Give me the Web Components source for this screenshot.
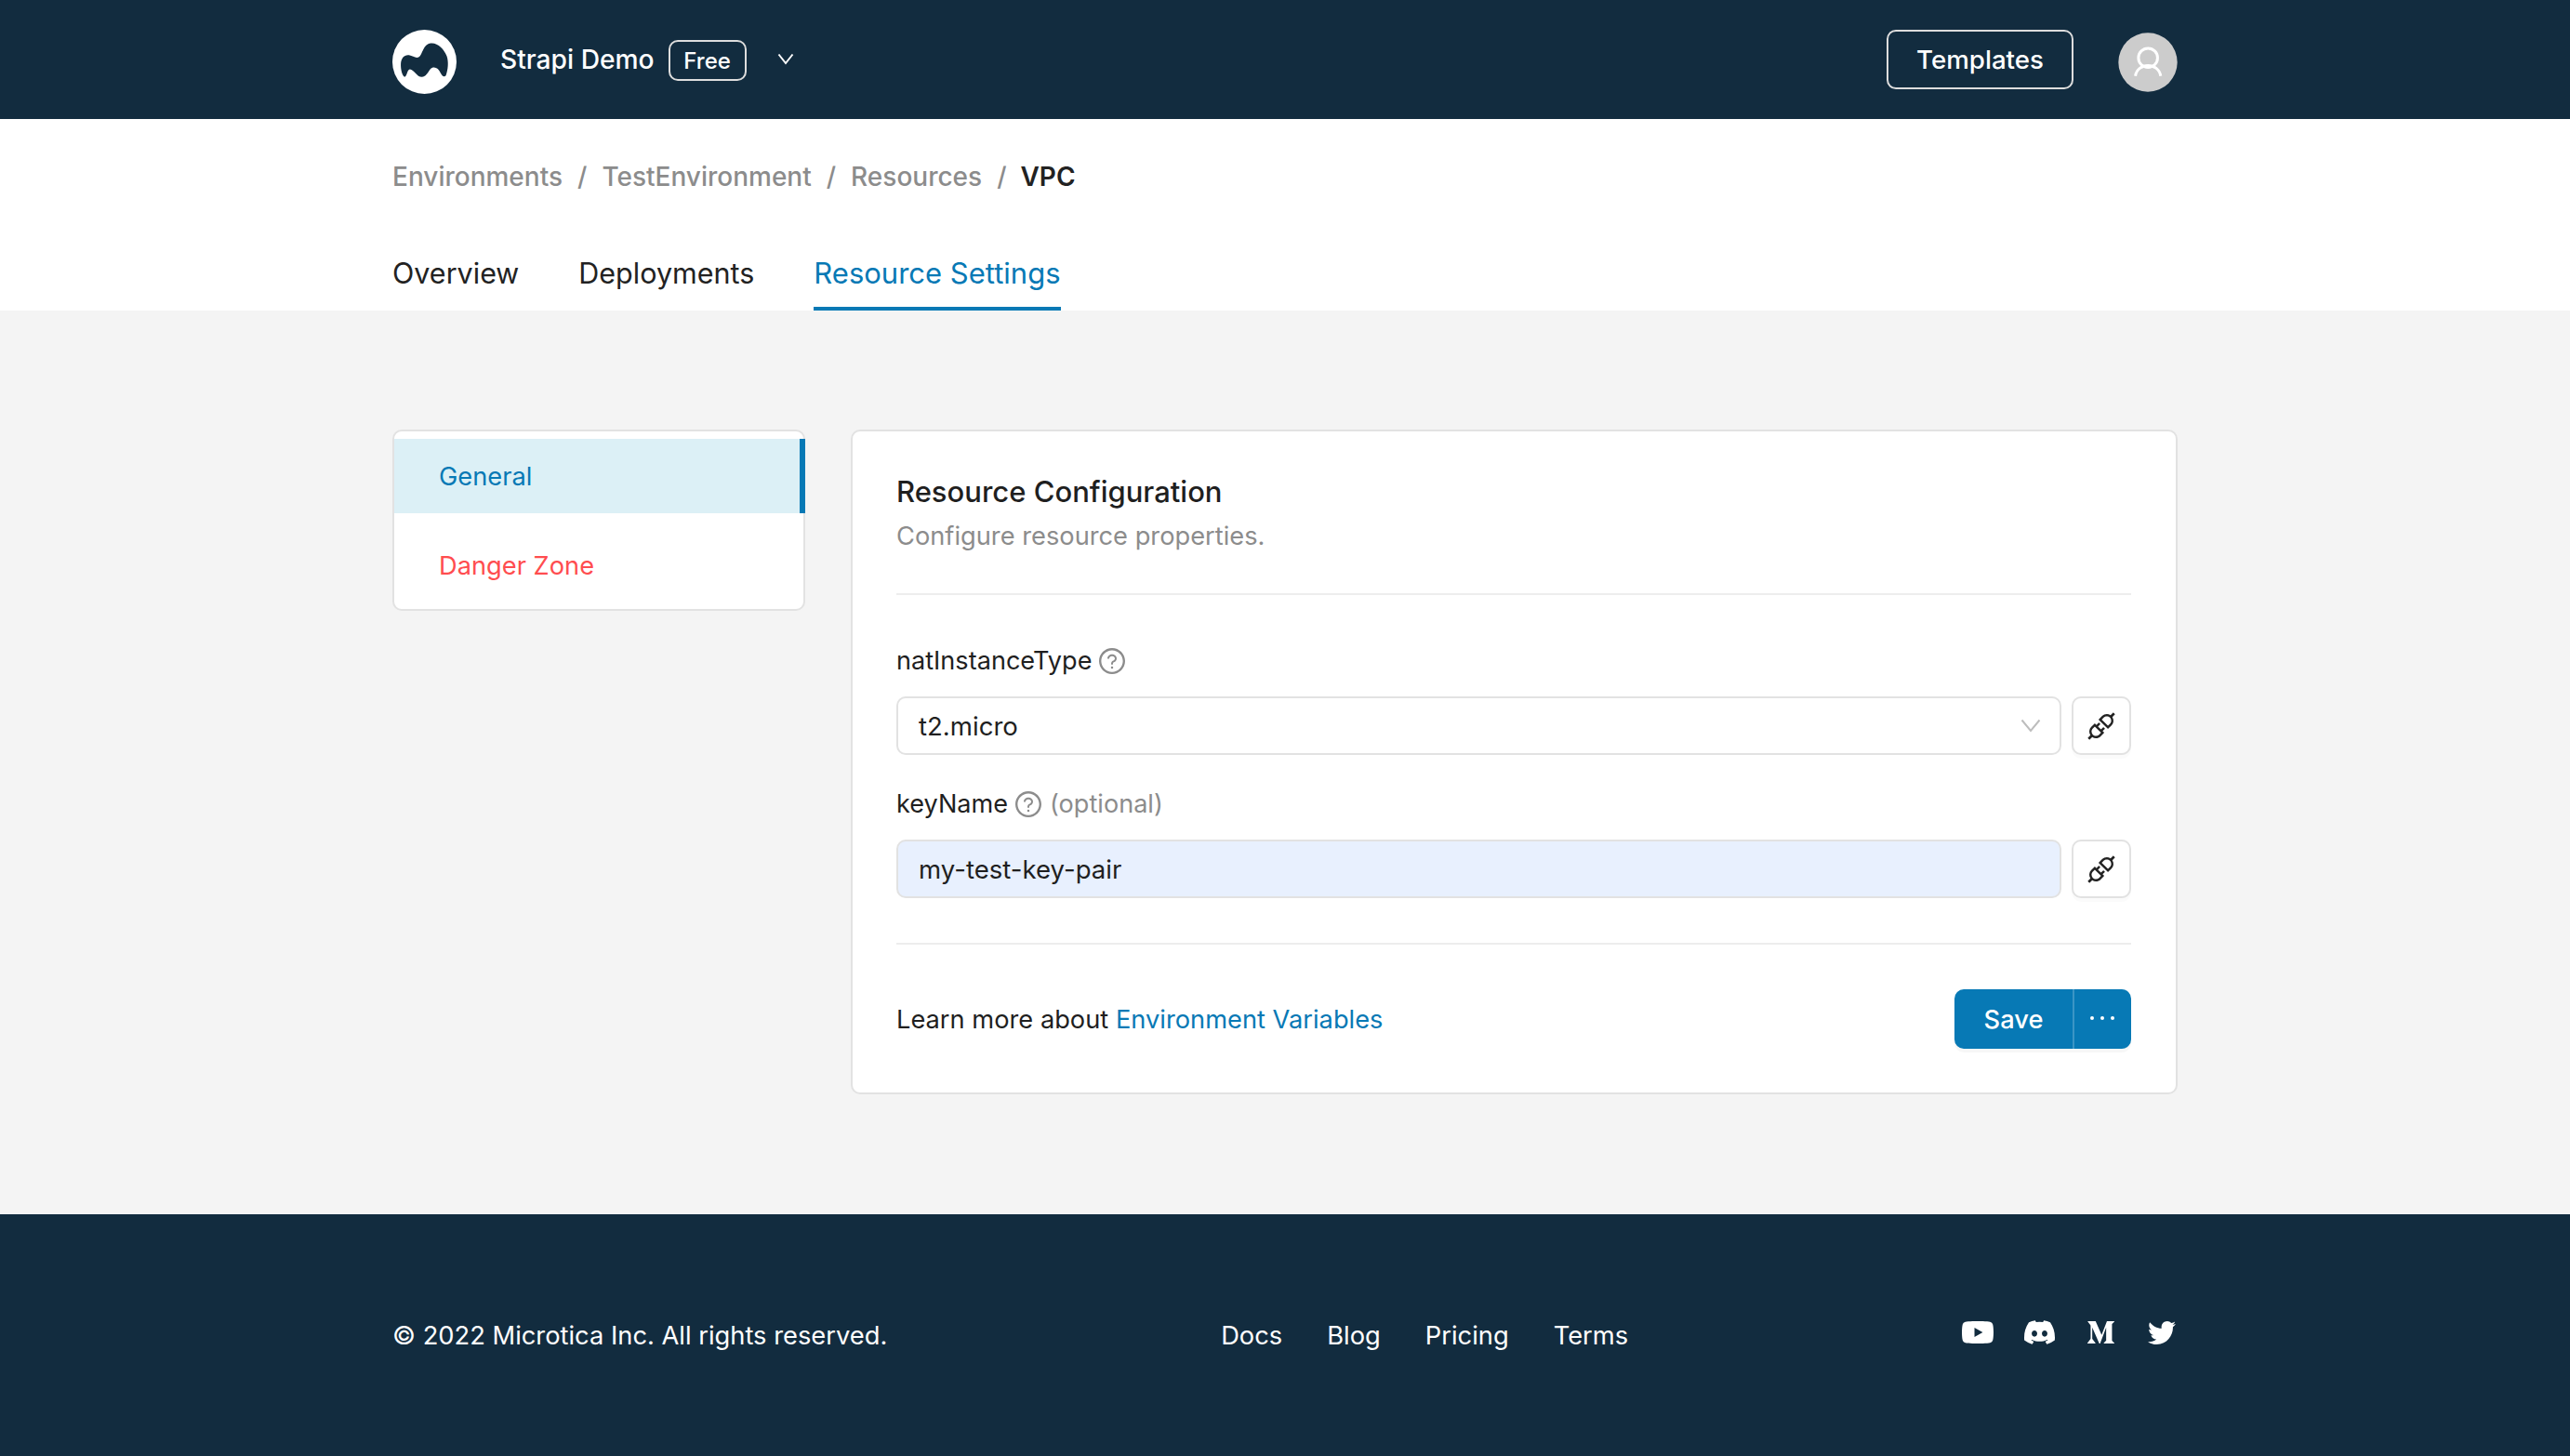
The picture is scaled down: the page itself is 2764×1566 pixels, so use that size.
<!DOCTYPE html>
<html lang="en">
<head>
<meta charset="utf-8">
<title>VPC - Resource Settings</title>
<style>
  html, body { margin: 0; padding: 0; background: #f4f4f4; }
  body { font-family: Inter, "Liberation Sans", sans-serif; font-size: 27.25px; color: #1f1f1f; }
</style>
</head>
<body>
<app-header></app-header>
<page-nav></page-nav>
<settings-page>
  <side-menu slot="side"></side-menu>
  <config-card slot="main"></config-card>
</settings-page>
<app-footer></app-footer>

<script>
const WRAP = "width: 1920px; margin: 0 auto;";
const HELP_PATH = "M512 64C264.6 64 64 264.6 64 512s200.6 448 448 448 448-200.6 448-448S759.4 64 512 64zm0 820c-205.4 0-372-166.6-372-372s166.6-372 372-372 372 166.6 372 372-166.6 372-372 372z M623.6 316.7C593.6 290.4 554 276 512 276s-81.6 14.5-111.6 40.7C369.2 344 352 380.7 352 420v7.6c0 4.4 3.6 8 8 8h48c4.4 0 8-3.6 8-8V420c0-44.1 43.1-80 96-80s96 35.9 96 80c0 31.1-22 59.6-56.1 72.7-21.2 8.1-39.2 22.3-52.1 40.9-13.1 19-19.9 41.8-19.9 64.9V620c0 4.4 3.6 8 8 8h48c4.4 0 8-3.6 8-8v-22.7a48.3 48.3 0 0130.9-44.8c59-22.7 97.1-74.7 97.1-132.5.1-39.3-17.1-76-48.3-103.3z M472 732a40 40 0 1080 0 40 40 0 10-80 0z";
const PLUG_PATH = "M917.7 148.8l-42.4-42.4c-1.6-1.6-3.6-2.3-5.7-2.3s-4.1.8-5.7 2.3l-76.1 76.1a199.27 199.27 0 00-112.1-34.3c-51.2 0-102.4 19.5-141.5 58.6L432.3 308.7a8.03 8.03 0 000 11.3L704 591.7c1.6 1.6 3.6 2.3 5.7 2.3 2 0 4.1-.8 5.7-2.3l101.9-101.9c68.9-69 77-175.7 24.3-253.5l76.1-76.1c3.1-3.2 3.1-8.3 0-11.4zM769.1 441.7l-59.4 59.4-186.8-186.8 59.4-59.4c24.9-24.9 58.1-38.7 93.4-38.7 35.3 0 68.4 13.7 93.4 38.7 24.9 24.9 38.7 58.1 38.7 93.4 0 35.3-13.8 68.4-38.7 93.4zm-190.2 105a8.03 8.03 0 00-11.3 0L501 613.3 410.7 523l66.7-66.7c3.1-3.1 3.1-8.2 0-11.3L441 408.6a8.03 8.03 0 00-11.3 0L363 475.3l-43-43a7.85 7.85 0 00-5.7-2.3c-2 0-4.1.8-5.7 2.3L206.8 534.2c-68.9 69-77 175.7-24.3 253.5l-76.1 76.1a8.03 8.03 0 000 11.3l42.4 42.4c1.6 1.6 3.6 2.3 5.7 2.3s4.1-.8 5.7-2.3l76.1-76.1c33.7 22.9 72.9 34.3 112.1 34.3 51.2 0 102.4-19.5 141.5-58.6l101.9-101.9c3.1-3.1 3.1-8.2 0-11.3l-43-43 66.7-66.7c3.1-3.1 3.1-8.2 0-11.3l-36.6-36.2zM441.7 769.1a131.32 131.32 0 01-93.4 38.7c-35.3 0-68.4-13.7-93.4-38.7a131.32 131.32 0 01-38.7-93.4c0-35.3 13.7-68.4 38.7-93.4l59.4-59.4 186.8 186.8-59.4 59.4z";

class AppHeader extends HTMLElement {
  constructor() {
    super();
    this.attachShadow({ mode: "open" });
    this.shadowRoot.innerHTML = `
      <style>
        :host { display: block; background: #122c3f; color: #fff; }
        .bar { ${WRAP} height: 128px; display: flex; align-items: center; }
        .logo { width: 69px; height: 69px; display: block; margin: 4px 47px 0 0; }
        .name { font-size: 28.2px; font-weight: 500; }
        .badge { margin: 2px 0 0 15px; width: 84px; height: 44px; box-sizing: border-box; border: 2px solid #ddd;
                 border-radius: 10px; display: flex; align-items: center; justify-content: center;
                 font-size: 24px; font-weight: 500; }
        .chev { margin-left: 33px; width: 18px; height: 13px; display: block; margin-bottom: 2px; }
        .tpl { margin-left: auto; width: 201px; height: 64px; box-sizing: border-box; border: 2px solid #ddd;
               border-radius: 10px; display: flex; align-items: center; justify-content: center;
               font-size: 27.7px; font-weight: 500; }
        .avatar { margin: 6px 0 0 48px; width: 64px; height: 64px; display: block; }
      </style>
      <div class="bar">
        <svg class="logo" viewBox="67 97 205 205">
          <circle cx="169.5" cy="199.5" r="102.5" fill="#fff"/>
          <path fill="#122c3f" d="M94 205 C95 188 105 176 120 178 C133 180 142 190 152 184 C164 176 165 142 190 140 C212 138 232 158 241 182 C247 200 245 225 238 243 C232 250 226 245 221 235 C215 222 206 215 195 218 C183 222 179 247 162 248 C146 249 136 224 123 223 C114 224 114 245 106 248 C99 245 93 225 94 205Z"/>
        </svg>
        <span class="name">Strapi Demo</span>
        <span class="badge">Free</span>
        <svg class="chev" viewBox="0 0 18 13"><path d="M1.5 1.5 L9 11 L16.5 1.5" fill="none" stroke="#fff" stroke-width="2"/></svg>
        <span class="tpl">Templates</span>
        <svg class="avatar" viewBox="893 105 193 191">
          <circle cx="989.500" cy="200.500" r="95.500" fill="#ccc"/>
          <circle cx="990" cy="186" r="31" fill="none" stroke="#fff" stroke-width="9"/>
          <path d="M949 245 C955 200 1025 200 1031 245" fill="none" stroke="#fff" stroke-width="9"/>
        </svg>
      </div>`;
  }
}

class PageNav extends HTMLElement {
  constructor() {
    super();
    this.attachShadow({ mode: "open" });
    this.shadowRoot.innerHTML = `
      <style>
        :host { display: block; background: #fff; }
        .in { ${WRAP} height: 206px; }
        .crumbs { height: 124px; display: flex; align-items: center; gap: 16px; font-size: 28px; font-weight: 500; color: #8c8c8c; }
        .crumbs b { font-weight: 600; color: #222; margin-left: -1px; }
        .tabs { display: flex; gap: 64px; height: 82px; }
        .tab { height: 82px; box-sizing: border-box; padding-top: 22px; line-height: 40px; font-size: 30.5px; color: #222; }
        .tab.on { font-size: 31px; color: #0779b5; border-bottom: 4px solid #0779b5; }
      </style>
      <div class="in">
        <div class="crumbs">
          <span>Environments</span><span>/</span><span>TestEnvironment</span><span>/</span><span>Resources</span><span>/</span><b>VPC</b>
        </div>
        <div class="tabs">
          <span class="tab">Overview</span>
          <span class="tab">Deployments</span>
          <span class="tab on">Resource Settings</span>
        </div>
      </div>`;
  }
}

class SettingsPage extends HTMLElement {
  constructor() {
    super();
    this.attachShadow({ mode: "open" });
    this.shadowRoot.innerHTML = `
      <style>
        :host { display: block; background: #f4f4f4; }
        .grid { ${WRAP} box-sizing: border-box; padding: 128px 0 129px; display: grid;
                grid-template-columns: 444px 1427px; column-gap: 49px; align-items: start; }
      </style>
      <div class="grid"><slot name="side"></slot><slot name="main"></slot></div>`;
  }
}

class SideMenu extends HTMLElement {
  constructor() {
    super();
    this.attachShadow({ mode: "open" });
    this.shadowRoot.innerHTML = `
      <style>
        :host { display: block; height: 195px; box-sizing: border-box; background: #fff; border: 2px solid #e2e2e2;
                border-radius: 10px; padding: 8px 0 7px; }
        .item { height: 80px; box-sizing: border-box; display: flex; align-items: center; padding-left: 48px; }
        .on { background: #dcf0f6; color: #0779b5; border-right: 6px solid #0779b5; margin-right: -2px; }
        .danger { color: #ff4d4f; margin-top: 16px; }
      </style>
      <div class="item on">General</div>
      <div class="item danger">Danger Zone</div>`;
  }
}

class HelpIcon extends HTMLElement {
  constructor() {
    super();
    this.attachShadow({ mode: "open" });
    this.shadowRoot.innerHTML = `
      <style>
        :host { display: inline-flex; margin-top: -1px; }
        svg { width: 28px; height: 28px; fill: #8c8c8c; display: block; }
      </style>
      <svg viewBox="64 64 896 896"><path d="${HELP_PATH}"/></svg>`;
  }
}

class PlugButton extends HTMLElement {
  constructor() {
    super();
    this.attachShadow({ mode: "open" });
    this.shadowRoot.innerHTML = `
      <style>
        :host { display: flex; width: 64px; height: 63px; box-sizing: border-box; align-items: center; justify-content: center;
                background: #fff; border: 2px solid #e2e2e2; border-radius: 10px; box-shadow: 0 4px 0 rgba(0,0,0,.015); flex: none; }
        svg { width: 32px; height: 32px; fill: #222; display: block; }
      </style>
      <svg viewBox="64 64 896 896"><path d="${PLUG_PATH}"/></svg>`;
  }
}

class FormField extends HTMLElement {
  static get observedAttributes() { return ["label", "value", "kind", "optional"]; }
  constructor() {
    super();
    this.attachShadow({ mode: "open" });
  }
  connectedCallback() { this._render(); }
  attributeChangedCallback() { this._render(); }
  _render() {
    const kind = this.getAttribute("kind") || "input";
    const opt = this.hasAttribute("optional");
    this.shadowRoot.innerHTML = `
      <style>
        :host { display: block; }
        .label { height: 40px; line-height: 40px; display: flex; align-items: center; gap: 8px; margin-bottom: 18px; font-size: 27.1px; }
        .opt { color: #8c8c8c; margin-left: 1px; }
        .row { display: flex; gap: 11px; }
        .box { flex: 1; height: 63px; box-sizing: border-box; border: 2px solid #e2e2e2; border-radius: 10px; font-size: 27.6px;
               display: flex; align-items: center; padding: 0 20px 0 22px; justify-content: space-between; background: #fff; }
        .box.fill { background: #e8f0fe; }
        .chev { width: 22px; height: 15px; display: block; }
      </style>
      <div class="label"><span>${this.getAttribute("label") || ""}</span><help-icon></help-icon>${opt ? '<span class="opt">(optional)</span>' : ""}</div>
      <div class="row">
        <div class="box ${kind === "input" ? "fill" : ""}">
          <span>${this.getAttribute("value") || ""}</span>
          ${kind === "select" ? '<svg class="chev" viewBox="0 0 22 15"><path d="M1.500 1.500 L11 13 L20.500 1.500" fill="none" stroke="#bdbdbd" stroke-width="2"/></svg>' : ""}
        </div>
        <plug-button></plug-button>
      </div>`;
  }
}

class SaveButton extends HTMLElement {
  constructor() {
    super();
    this.attachShadow({ mode: "open" });
    this.shadowRoot.innerHTML = `
      <style>
        :host { display: flex; width: 190px; height: 64px; background: #0779b5; color: #fff; border-radius: 10px;
                box-shadow: 0 4px 0 rgba(0,0,0,.03); overflow: hidden; }
        .save { width: 127px; display: flex; align-items: center; justify-content: center; font-weight: 500; }
        .sep { width: 2px; background: #3b95c5; }
        .more { flex: 1; display: flex; align-items: center; justify-content: center; gap: 7px; padding: 0 2px 2px 0; }
        .more i { width: 4px; height: 4px; border-radius: 50%; background: #fff; display: block; }
      </style>
      <span class="save">Save</span><span class="sep"></span>
      <span class="more"><i></i><i></i><i></i></span>`;
  }
}

class ConfigCard extends HTMLElement {
  constructor() {
    super();
    this.attachShadow({ mode: "open" });
    this.shadowRoot.innerHTML = `
      <style>
        :host { display: block; height: 715px; box-sizing: border-box; background: #fff; border: 2px solid #e2e2e2;
                border-radius: 10px; padding: 45px 48px 0 47px; }
        h2 { margin: 0; font-size: 31px; line-height: 40px; font-weight: 500; color: #1f1f1f; }
        p { margin: 8px 0 0; line-height: 40px; color: #8c8c8c; }
        hr { border: 0; height: 2px; background: #ededed; margin: 0; }
        .top { margin-top: 41px; margin-bottom: 51px; }
        .second { margin-top: 33px; }
        .bottom { margin-top: 48px; margin-bottom: 48px; }
        .foot { display: flex; align-items: center; justify-content: space-between; }
        a { color: #0779b5; text-decoration: none; }
      </style>
      <h2>Resource Configuration</h2>
      <p>Configure resource properties.</p>
      <hr class="top">
      <form-field label="natInstanceType" value="t2.micro" kind="select"></form-field>
      <form-field class="second" label="keyName" value="my-test-key-pair" kind="input" optional></form-field>
      <hr class="bottom">
      <div class="foot">
        <span>Learn more about <a>Environment Variables</a></span>
        <save-button></save-button>
      </div>`;
  }
}

class AppFooter extends HTMLElement {
  constructor() {
    super();
    this.attachShadow({ mode: "open" });
    this.shadowRoot.innerHTML = `
      <style>
        :host { display: block; background: #122c3f; color: #fff; }
        .in { ${WRAP} height: 260px; display: flex; align-items: center; justify-content: space-between; font-size: 27.3px; }
        .links { display: flex; gap: 48px; }
        .social { display: flex; align-items: center; margin: -6px 2px 0 0; }
        svg { fill: #fff; display: block; }
      </style>
      <div class="in">
        <span>© 2022 Microtica Inc. All rights reserved.</span>
        <div class="links"><span>Docs</span><span>Blog</span><span>Pricing</span><span>Terms</span></div>
        <div class="social">
          <svg width="34" height="24" viewBox="15 64 546 384" preserveAspectRatio="none"><path d="M549.655 124.083c-6.281-23.65-24.787-42.276-48.284-48.597C458.781 64 288 64 288 64S117.22 64 74.629 75.486c-23.497 6.322-42.003 24.947-48.284 48.597-11.412 42.867-11.412 132.305-11.412 132.305s0 89.438 11.412 132.305c6.281 23.65 24.787 41.5 48.284 47.821C117.22 448 288 448 288 448s170.78 0 213.371-11.486c23.497-6.321 42.003-24.171 48.284-47.821 11.412-42.867 11.412-132.305 11.412-132.305s0-89.438-11.412-132.305zm-317.51 213.508V175.185l142.739 81.205-142.739 81.201z"/></svg>
          <svg style="margin-left:33px" width="33" height="26" viewBox="0 1.8 16 12.4" preserveAspectRatio="none"><path d="M13.545 2.907a13.227 13.227 0 0 0-3.257-1.011.05.05 0 0 0-.052.025c-.141.25-.297.577-.406.833a12.19 12.19 0 0 0-3.658 0 8.258 8.258 0 0 0-.412-.833.051.051 0 0 0-.052-.025c-1.125.194-2.22.534-3.257 1.011a.041.041 0 0 0-.021.018C.356 6.024-.213 9.047.066 12.032c.001.014.01.028.021.037a13.276 13.276 0 0 0 3.995 2.02.05.05 0 0 0 .056-.019c.308-.42.582-.863.818-1.329a.05.05 0 0 0-.01-.059.051.051 0 0 0-.018-.011 8.875 8.875 0 0 1-1.248-.595.05.05 0 0 1-.02-.066.051.051 0 0 1 .015-.019c.084-.063.168-.129.248-.195a.05.05 0 0 1 .051-.007c2.619 1.196 5.454 1.196 8.041 0a.052.052 0 0 1 .053.007c.08.066.164.132.248.195a.051.051 0 0 1-.004.085 8.254 8.254 0 0 1-1.249.594.05.05 0 0 0-.03.03.052.052 0 0 0 .003.041c.24.465.515.909.817 1.329a.05.05 0 0 0 .056.019 13.235 13.235 0 0 0 4.001-2.02.049.049 0 0 0 .021-.037c.334-3.451-.559-6.449-2.366-9.106a.034.034 0 0 0-.02-.019Zm-8.198 7.307c-.789 0-1.438-.724-1.438-1.612 0-.889.637-1.613 1.438-1.613.807 0 1.45.73 1.438 1.613 0 .888-.637 1.612-1.438 1.612Zm5.316 0c-.788 0-1.438-.724-1.438-1.612 0-.889.637-1.613 1.438-1.613.807 0 1.451.73 1.438 1.613 0 .888-.631 1.612-1.438 1.612Z"/></svg>
          <svg style="margin-left:35px" width="29" height="24" viewBox="14 64 484 384" preserveAspectRatio="none"><path d="M71.5 142.3c.6-5.9-1.7-11.8-6.1-15.8L20.3 72.1V64h140.2l108.4 237.7L364.2 64h133.7v8.1l-38.6 37c-3.3 2.5-5 6.7-4.3 10.8v272c-.7 4.1 1 8.3 4.3 10.8l37.700 37v8.1H307.3v-8.1l39.1-37.9c3.8-3.8 3.800-5 3.800-10.8V171.2L241.5 447.1h-14.7L100.4 171.2v184.9c-1.1 7.8 1.5 15.6 7 21.2l50.8 61.6v8.1H14v-8.1l50.8-61.6c5.4-5.6 7.9-13.5 6.7-21.2V142.3z"/></svg>
          <svg style="margin-left:36px" width="30" height="25" viewBox="0 48 512 416" preserveAspectRatio="none"><path d="M459.37 151.716c.325 4.548.325 9.097.325 13.645 0 138.72-105.583 298.558-298.558 298.558-59.452 0-114.68-17.219-161.137-47.106 8.447.974 16.568 1.299 25.34 1.299 49.055 0 94.213-16.568 130.274-44.832-46.132-.975-84.792-31.188-98.112-72.772 6.498.974 12.995 1.624 19.818 1.624 9.421 0 18.843-1.3 27.614-3.573-48.081-9.747-84.143-51.98-84.143-102.985v-1.299c13.969 7.797 30.214 12.67 47.431 13.319-28.264-18.843-46.781-51.005-46.781-87.391 0-19.492 5.197-37.36 14.294-52.954 51.655 63.675 129.3 105.258 216.365 109.807-1.624-7.797-2.599-15.918-2.599-24.04 0-57.828 46.782-104.934 104.934-104.934 30.213 0 57.502 12.67 76.67 33.137 23.715-4.548 46.456-13.32 66.599-25.34-7.798 24.366-24.366 44.833-46.132 57.827 21.117-2.273 41.584-8.122 60.426-16.243-14.292 20.791-32.161 39.308-52.628 54.253z"/></svg>
        </div>
      </div>`;
  }
}

customElements.define("app-header", AppHeader);
customElements.define("page-nav", PageNav);
customElements.define("settings-page", SettingsPage);
customElements.define("side-menu", SideMenu);
customElements.define("help-icon", HelpIcon);
customElements.define("plug-button", PlugButton);
customElements.define("form-field", FormField);
customElements.define("save-button", SaveButton);
customElements.define("config-card", ConfigCard);
customElements.define("app-footer", AppFooter);
</script>
</body>
</html>
